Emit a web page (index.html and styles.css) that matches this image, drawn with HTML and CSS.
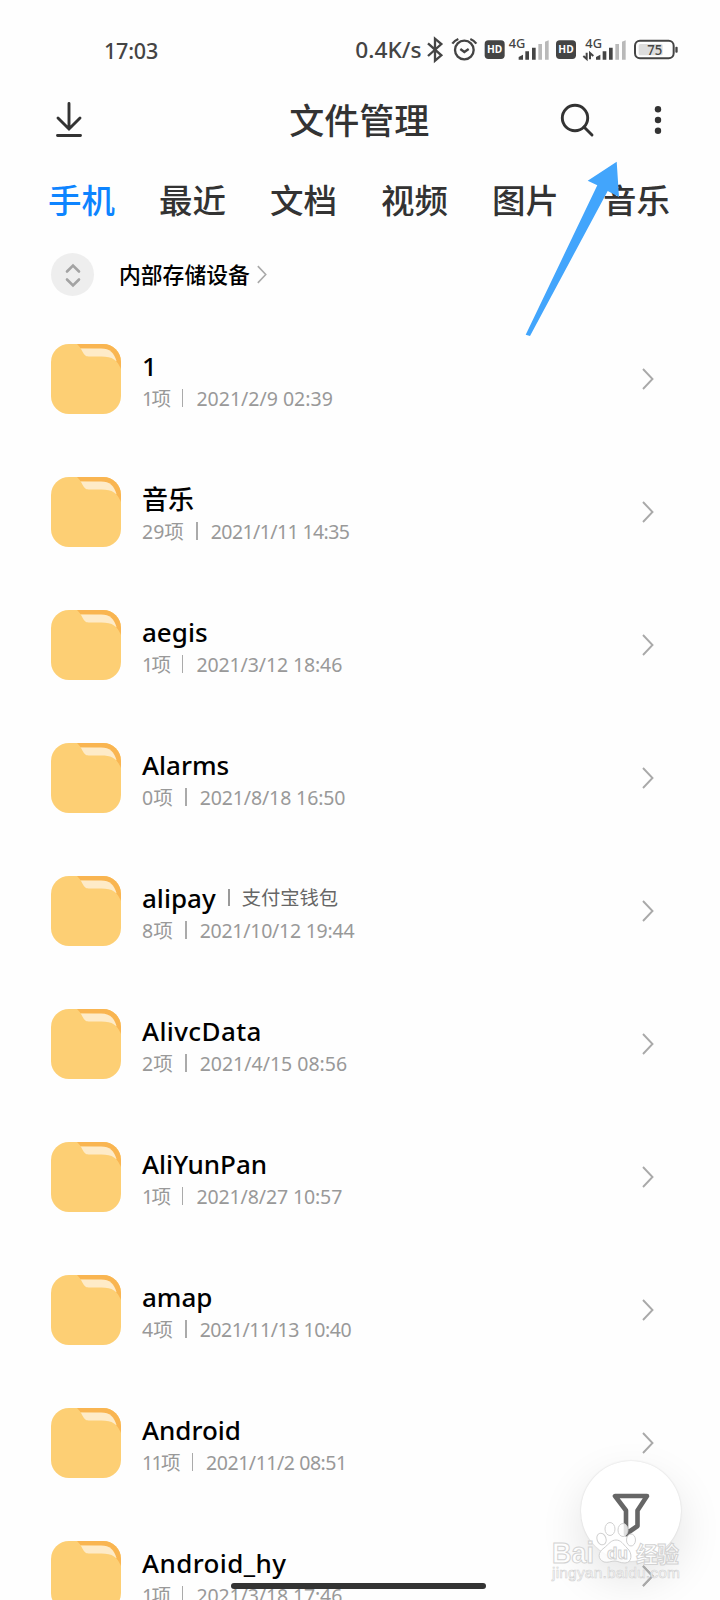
FILE: index.html
```html
<!DOCTYPE html>
<html lang="zh-CN">
<head>
<meta charset="utf-8">
<title>文件管理</title>
<link rel="stylesheet" href="styles.css">
</head>
<body>
<svg class="defs" width="0" height="0" aria-hidden="true">
  <defs>
    <clipPath id="tile"><rect width="70" height="70" rx="18"/></clipPath>
    <symbol id="folder" viewBox="0 0 70 70">
      <g clip-path="url(#tile)">
        <rect width="70" height="70" fill="#fdcf74"/>
        <path d="M26 0H70V25C67 16 65 10 57 6L29 4Z" fill="#f9b551"/>
        <path d="M29 4.500H50C60 4.500 67 11 70 25L60 30L34 14Z" fill="#f9b551"/>
        <path d="M29 4.500H50C59 4.500 63 9 65.500 17L60 19H34Z" fill="#feebc8"/>
        <path d="M25 0C29 2 30 5 32 8.500C34 12 35 12.500 39 12.500H50C62 12.500 66 16 70 25V40H20V0Z" fill="#fdcf74"/>
      </g>
    </symbol>
    <symbol id="chevron" viewBox="0 0 12 22"><path d="M1 1L10.500 11L1 21" fill="none" stroke="#a9a9a9" stroke-width="1.900"/></symbol>
  </defs>
</svg>
<div class="screen">
  <div class="status">
    <span class="clock">17:03</span>
    <svg class="status-icons" width="360" height="50" viewBox="0 0 1080 150">
      <text x="46" y="98" font-size="64" textLength="199" lengthAdjust="spacingAndGlyphs" class="st">0.4K/s</text>
      <path d="M264 55L304 91L285 107V41L304 57L264 93" fill="none" stroke="#444" stroke-width="7"/>
      <g fill="none" stroke="#444" stroke-width="7"><circle cx="373" cy="75" r="28"/><path d="M337 56C342 49 348 45 355 42M391 42C398 45 404 49 409 56M361 72L373 81L386 72"/></g>
      <rect x="434" y="46" width="60" height="56" rx="11" fill="#444"/><text x="441" y="84" font-size="29" textLength="46" lengthAdjust="spacingAndGlyphs" class="hd">HD</text>
      <text x="506" y="70" font-size="38" textLength="50" lengthAdjust="spacingAndGlyphs" class="st">4G</text>
      <path d="M536 104V96L549 89V104ZM556 79H567V104H556ZM576 68H587V104H576Z" fill="#444"/><path d="M595 57H606V104H595ZM615 50L626 46V104H615Z" fill="#b9b9b9"/>
      <rect x="648" y="46" width="60" height="56" rx="11" fill="#444"/><text x="655" y="84" font-size="29" textLength="46" lengthAdjust="spacingAndGlyphs" class="hd">HD</text>
      <text x="736" y="70" font-size="38" textLength="50" lengthAdjust="spacingAndGlyphs" class="st">4G</text>
      <path d="M730 93L740 102V83M750 103V84L760 93" fill="none" stroke="#444" stroke-width="6"/>
      <path d="M768 104V96L781 89V104ZM788 79H799V104H788ZM807 68H818V104H807Z" fill="#444"/><path d="M826 57H837V104H826ZM846 50L857 46V104H846Z" fill="#b9b9b9"/>
      <rect x="885" y="47" width="116" height="53" rx="15" fill="none" stroke="#444" stroke-width="6"/><rect x="896" y="57" width="72" height="34" rx="5" fill="#ddd"/><rect x="1006" y="65" width="7" height="18" rx="3" fill="#444"/>
      <text x="922" y="89" font-size="41" textLength="45" lengthAdjust="spacingAndGlyphs" class="st">75</text>
    </svg>
  </div>
  <header class="bar">
    <svg width="28" height="36" viewBox="0 0 28 36"><path d="M14 1.500V27M3 16L14 27L25 16M2.500 33.500H25.500" fill="none" stroke="#333" stroke-width="2.900" stroke-linecap="round"/></svg>
    <h1 class="title">文件管理</h1>
    <div class="actions">
      <svg width="34" height="34" viewBox="0 0 34 34" fill="none" stroke="#333" stroke-width="2.900" stroke-linecap="round"><circle cx="15" cy="15" r="12.700"/><path d="M24 24L32 32"/></svg>
      <svg width="8" height="30" viewBox="0 0 8 30" fill="#333"><circle cx="4" cy="4.300" r="3.200"/><circle cx="4" cy="15" r="3.200"/><circle cx="4" cy="25.700" r="3.200"/></svg>
    </div>
  </header>
  <nav class="tabs">
    <span class="tab active">手机</span><span class="tab">最近</span><span class="tab">文档</span><span class="tab">视频</span><span class="tab">图片</span><span class="tab">音乐</span>
  </nav>
  <div class="path">
    <span class="sort"><svg width="18" height="26" viewBox="0 0 18 26"><path d="M3 9.500L9 3.500L15 9.500M3 17.500L9 23.500L15 17.500" fill="none" stroke="#a3a3a3" stroke-width="2.600" stroke-linecap="round"/></svg></span>
    <span class="location">内部存储设备</span>
    <svg class="path-chevron" width="10" height="19"><use href="#chevron"/></svg>
  </div>
  <main class="list">
    <div class="row"><svg class="folder"><use href="#folder"/></svg><div class="info"><div class="name">1</div><div class="meta"><span class="one">1项</span><i></i><span>2021/2/9 02:39</span></div></div><svg class="go"><use href="#chevron"/></svg></div>
    <div class="row"><svg class="folder"><use href="#folder"/></svg><div class="info"><div class="name">音乐</div><div class="meta"><span>29项</span><i></i><span class="tightest">2021/1/11 14:35</span></div></div><svg class="go"><use href="#chevron"/></svg></div>
    <div class="row"><svg class="folder"><use href="#folder"/></svg><div class="info"><div class="name">aegis</div><div class="meta"><span class="one">1项</span><i></i><span class="snug">2021/3/12 18:46</span></div></div><svg class="go"><use href="#chevron"/></svg></div>
    <div class="row"><svg class="folder"><use href="#folder"/></svg><div class="info"><div class="name">Alarms</div><div class="meta"><span>0项</span><i></i><span class="snug">2021/8/18 16:50</span></div></div><svg class="go"><use href="#chevron"/></svg></div>
    <div class="row"><svg class="folder"><use href="#folder"/></svg><div class="info"><div class="name">alipay<i></i><span class="alias">支付宝钱包</span></div><div class="meta"><span>8项</span><i></i><span class="close">2021/10/12 19:44</span></div></div><svg class="go"><use href="#chevron"/></svg></div>
    <div class="row"><svg class="folder"><use href="#folder"/></svg><div class="info"><div class="name wide">AlivcData</div><div class="meta"><span>2项</span><i></i><span>2021/4/15 08:56</span></div></div><svg class="go"><use href="#chevron"/></svg></div>
    <div class="row"><svg class="folder"><use href="#folder"/></svg><div class="info"><div class="name">AliYunPan</div><div class="meta"><span class="one">1项</span><i></i><span class="snug">2021/8/27 10:57</span></div></div><svg class="go"><use href="#chevron"/></svg></div>
    <div class="row"><svg class="folder"><use href="#folder"/></svg><div class="info"><div class="name">amap</div><div class="meta"><span>4项</span><i></i><span class="tight">2021/11/13 10:40</span></div></div><svg class="go"><use href="#chevron"/></svg></div>
    <div class="row"><svg class="folder"><use href="#folder"/></svg><div class="info"><div class="name">Android</div><div class="meta"><span class="one">11项</span><i></i><span class="tight">2021/11/2 08:51</span></div></div><svg class="go"><use href="#chevron"/></svg></div>
    <div class="row"><svg class="folder"><use href="#folder"/></svg><div class="info"><div class="name wide">Android_hy</div><div class="meta"><span class="one">1项</span><i></i><span class="snug">2021/3/18 17:46</span></div></div><svg class="go"><use href="#chevron"/></svg></div>
  </main>
  <div class="fab"><svg width="38" height="44" viewBox="0 0 38 44"><path d="M3 3H35L25.500 17.500V33L14 41V17.500Z" fill="none" stroke="#666" stroke-width="4.600" stroke-linejoin="round"/></svg></div>
  <svg class="fab-go"><use href="#chevron"/></svg>
  <svg class="watermark" width="140" height="70" viewBox="0 0 140 70">
    <g fill="#fff" fill-opacity=".8" stroke="#d2d2d2" stroke-width="1">
      <ellipse cx="16.500" cy="24" rx="4.500" ry="6" transform="rotate(-20 16.500 24)" class="paw"/><ellipse cx="25" cy="14" rx="5" ry="6.500" class="paw"/><ellipse cx="38" cy="15" rx="5" ry="6.500" class="paw"/><ellipse cx="46" cy="25" rx="4.500" ry="6" class="paw"/>
      <path class="paw" d="M31 25C36 25 38 29 42 33C48 38 47 48 40 48C35 48 33 46 30 46C26 46 23 48 19 47C12 44 13 37 19 33C24 29 26 25 31 25Z"/>
      <text x="-33" y="48" font-size="29" textLength="42" lengthAdjust="spacingAndGlyphs" class="mark">Bai</text><text x="22" y="44" font-size="17" class="mark">du</text><text x="51" y="47" font-size="22" textLength="43" class="mark">经验</text>
      <text x="-33" y="63" font-size="15.500" textLength="128" class="url">jingyan.baidu.com</text>
    </g>
  </svg>
  <div class="home"></div>
  <svg class="pointer" width="100" height="180" viewBox="522 160 100 180"><path d="M616.700 161.700L587.700 180.700L597.300 185.300L525.700 334.700L530 336L607.700 191L619 197Z" fill="#42a5fc"/></svg>
</div>
</body>
</html>
```
FILE: styles.css
```css
* { box-sizing: border-box; }
body { margin: 0; background: #fefefe; font-family: "Noto Sans", "Noto Sans CJK SC", sans-serif; color: #333; }
svg { display: block; overflow: visible; flex: none; }
.defs { position: absolute; }
.screen { position: relative; width: 720px; height: 1600px; overflow: hidden; display: flex; flex-direction: column; background: #fefefe; }
.status { height: 75px; padding: 25px 20px 0 104px; display: flex; justify-content: space-between; flex: none; }
.clock { font-size: 21.500px; line-height: 51px; color: #444; font-weight: 500; letter-spacing: -.2px; }
.st { fill: #444; font-weight: 500; }
.hd { fill: #fff; font-weight: 700; }
.bar { height: 90px; padding: 0 58.500px 0 55px; display: grid; grid-template-columns: 1fr auto 1fr; align-items: center; flex: none; }
.title { margin: 2px 0 0 2px; font-size: 35px; line-height: 50px; font-weight: 500; }
.actions { display: flex; justify-content: flex-end; align-items: center; gap: 60px; margin-top: -1px; }
.tabs { height: 72px; padding-left: 48px; display: flex; gap: 43px; flex: none; }
.tab { width: 68px; white-space: nowrap; font-size: 33.500px; line-height: 70px; font-weight: 500; }
.active { color: #0d84ff; }
.path { height: 75.500px; padding-left: 51px; display: flex; align-items: center; flex: none; }
.sort { width: 43px; height: 43px; border-radius: 50%; background: #eee; display: grid; place-items: center; }
.location { margin: -2px 0 0 25px; font-size: 21.800px; font-weight: 500; color: #000; }
.path-chevron { margin-left: 7px; }
.list { flex: none; display: flex; flex-direction: column; }
.row { height: 133px; padding: 0 66.500px 0 51px; display: flex; align-items: center; flex: none; }
.folder { width: 70px; height: 70px; }
.info { flex: 1; padding: 2px 0 0 21px; display: flex; flex-direction: column; }
.name { height: 36px; display: flex; align-items: center; color: #000; font-size: 26px; line-height: 36px; font-weight: 500; }
.name i { width: 2px; height: 17px; margin: 0 12px; background: #999; }
.wide { letter-spacing: .4px; }
.alias { font-size: 19.300px; font-weight: 400; color: #666; }
.meta { height: 29px; display: flex; align-items: center; font-size: 19.500px; line-height: 29px; color: #999; white-space: nowrap; }
.meta i { width: 1.500px; height: 18px; margin: 0 13px 0 12.500px; background: #aaa; }
.snug { letter-spacing: -.12px; }
.close { letter-spacing: -.25px; }
.tight { letter-spacing: -.45px; }
.tightest { letter-spacing: -.6px; }
.one { letter-spacing: -1.600px; }
.go { width: 12px; height: 22px; }
.fab { position: absolute; left: 581px; top: 1460.500px; width: 100px; height: 100px; border-radius: 50%; background: #fff; box-shadow: 0 0 2px rgba(0,0,0,.15), 0 18px 45px rgba(0,0,0,.11); display: grid; place-items: center; padding-top: 8px; }
.fab-go { position: absolute; left: 641.500px; top: 1565px; width: 12px; height: 22px; }
.watermark { position: absolute; left: 585px; top: 1515px; }
.paw { fill: #fff; stroke: #d0d0d0; }
.mark { font-family: "Liberation Sans", "Noto Sans CJK SC", sans-serif; font-weight: 700; }
.url { font-family: "Liberation Sans", sans-serif; stroke-width: .6px; }
.home { position: absolute; left: 231px; top: 1583px; width: 255px; height: 6px; border-radius: 3px; background: #333; }
.pointer { position: absolute; left: 522px; top: 160px; }
```
